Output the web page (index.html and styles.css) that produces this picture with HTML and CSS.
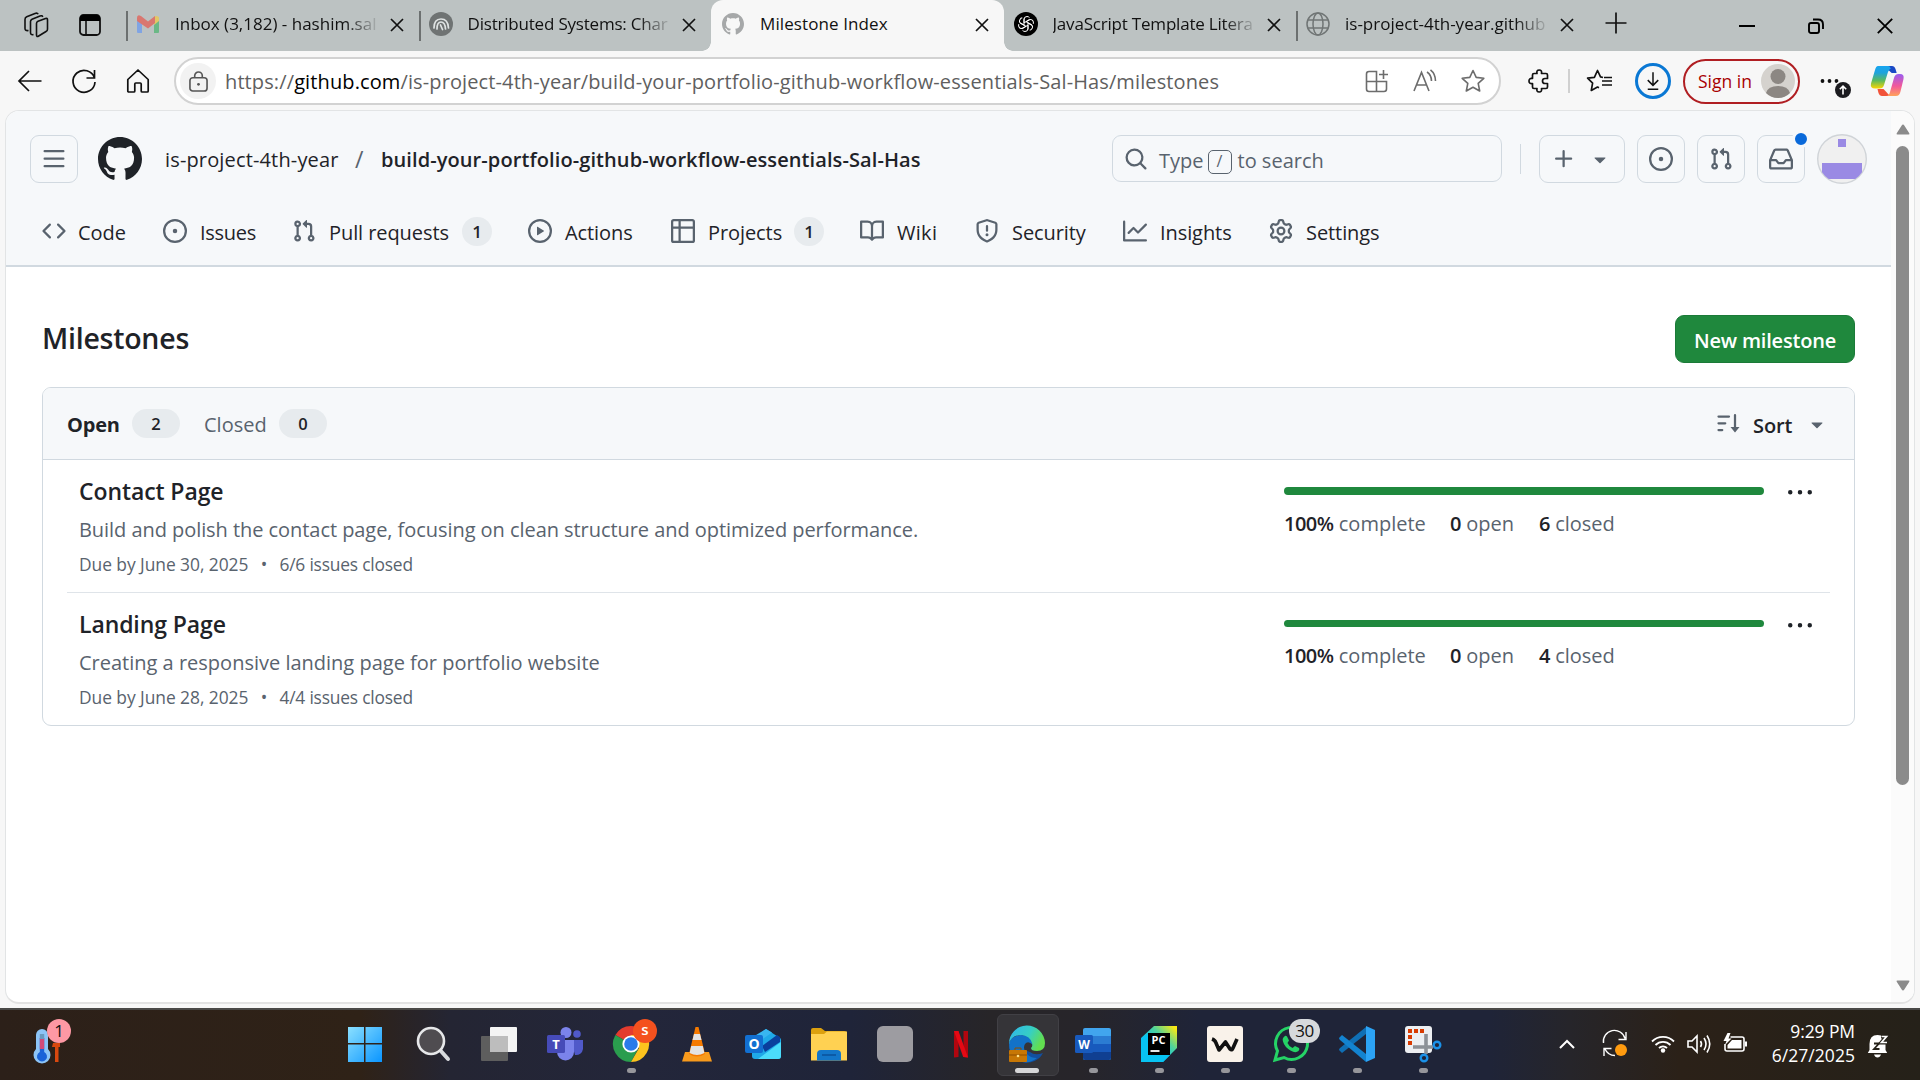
FILE: index.html
```html
<!DOCTYPE html>
<html lang="en">
<head>
<meta charset="utf-8">
<title>Milestone Index</title>
<link rel="stylesheet" href="styles.css">
</head>
<body>
<svg class="defs" width="0" height="0">
  <symbol id="mark" viewBox="0 0 24 24"><path d="M12 1C5.9225 1 1 5.9225 1 12C1 16.8675 4.14875 20.9787 8.52125 22.4362C9.07125 22.5325 9.2775 22.2025 9.2775 21.9137C9.2775 21.6525 9.26375 20.7862 9.26375 19.865C6.5 20.3737 5.785 19.1912 5.565 18.5725C5.44125 18.2562 4.905 17.28 4.4375 17.0187C4.0525 16.8125 3.5025 16.3037 4.42375 16.29C5.29 16.2762 5.90875 17.0875 6.115 17.4175C7.105 19.0812 8.68625 18.6137 9.31875 18.325C9.415 17.61 9.70375 17.1287 10.02 16.8537C7.5725 16.5787 5.015 15.63 5.015 11.4225C5.015 10.2262 5.44125 9.23625 6.1425 8.46625C6.0325 8.19125 5.6475 7.06375 6.2525 5.55125C6.2525 5.55125 7.17375 5.2625 9.2775 6.67875C10.1575 6.43125 11.0925 6.3075 12.0275 6.3075C12.9625 6.3075 13.8975 6.43125 14.7775 6.67875C16.8813 5.24875 17.8025 5.55125 17.8025 5.55125C18.4075 7.06375 18.0225 8.19125 17.9125 8.46625C18.6138 9.23625 19.04 10.2125 19.04 11.4225C19.04 15.6437 16.4688 16.5787 14.0213 16.8537C14.42 17.1975 14.7638 17.8575 14.7638 18.8887C14.7638 20.36 14.75 21.5425 14.75 21.9137C14.75 22.2025 14.9563 22.5462 15.5063 22.4362C19.8513 20.9787 23 16.8537 23 12C23 5.9225 18.0775 1 12 1Z"/></symbol>
  <symbol id="pr" viewBox="0 0 16 16"><path d="M1.5 3.25a2.25 2.25 0 1 1 3 2.122v5.256a2.251 2.251 0 1 1-1.5 0V5.372A2.25 2.25 0 0 1 1.5 3.25Zm5.677-.177L9.573.677A.25.25 0 0 1 10 .854V2.5h1A2.5 2.5 0 0 1 13.5 5v5.628a2.251 2.251 0 1 1-1.5 0V5a1 1 0 0 0-1-1h-1v1.646a.25.25 0 0 1-.427.177L7.177 3.427a.25.25 0 0 1 0-.354ZM3.75 2.5a.75.75 0 1 0 0 1.5.75.75 0 0 0 0-1.5Zm0 9.5a.75.75 0 1 0 0 1.5.75.75 0 0 0 0-1.5Zm8.25.75a.75.75 0 1 0 1.5 0 .75.75 0 0 0-1.5 0Z"/></symbol>
  <symbol id="issue" viewBox="0 0 16 16"><path d="M8 9.5a1.5 1.5 0 1 0 0-3 1.5 1.5 0 0 0 0 3Z"/><path d="M8 0a8 8 0 1 1 0 16A8 8 0 0 1 8 0ZM1.5 8a6.5 6.5 0 1 0 13 0 6.5 6.5 0 0 0-13 0Z"/></symbol>
  <symbol id="caret" viewBox="0 0 16 16"><path d="m4.427 7.427 3.396 3.396a.25.25 0 0 0 .354 0l3.396-3.396A.25.25 0 0 0 11.396 7H4.604a.25.25 0 0 0-.177.427Z"/></symbol>
  <symbol id="kebab" viewBox="0 0 16 16"><path d="M8 9a1.5 1.5 0 1 0 0-3 1.5 1.5 0 0 0 0 3ZM1.5 9a1.5 1.5 0 1 0 0-3 1.5 1.5 0 0 0 0 3Zm13 0a1.5 1.5 0 1 0 0-3 1.5 1.5 0 0 0 0 3Z"/></symbol>
  <symbol id="x" viewBox="0 0 14 14"><path d="M1 1l12 12M13 1L1 13" fill="none" stroke="#111" stroke-width="1.7"/></symbol>
</svg>

<header class="tabstrip">
  <div class="strip-start">
    <svg class="workspaces" viewBox="0 0 26 26" fill="none" stroke="#111" stroke-width="1.6" stroke-linejoin="round"><path d="M13.500 11.500q0-1.500 1.500-2.200l7.500-2.800q2-.6 2 1.200v9.500q0 1.500-1.500 2.300l-7.300 4.500q-2.200 1.300-2.200-1z"/><path d="M10.500 22.500q-3 .8-3-2V9.500q0-1.600 1.500-2.300l8-3.200q2.200-.8 2.700 1"/><path d="M5.500 18.500Q2 19 2 16.500V7.500q0-2 1.700-2.700l8.300-3.300q2.500-1 3 .8"/></svg>
    <svg class="tab-actions" viewBox="0 0 22 22"><rect x="1" y="1" width="20" height="20" rx="3.500" fill="none" stroke="#111" stroke-width="1.800"/><path d="M1 7V4a3 3 0 0 1 3-3h14a3 3 0 0 1 3 3v3z" fill="#000"/><path d="M7 7v14" stroke="#111" stroke-width="1.600"/></svg>
  </div>
  <div class="tab">
    <svg class="favicon dim" viewBox="0 0 24 24"><path d="M1 5.500v14.500q0 1 1 1h4V10z" fill="#6d9bef"/><path d="M23 5.500v14.500q0 1-1 1h-4V10z" fill="#51b573"/><path d="M18 5l2-1q3 0 3 2v3l-5 4z" fill="#f0c948"/><path d="M1 6q0-4 4-2l7 5.500L19 4v7l-7 5.500L1 9z" fill="#e35e55"/></svg>
    <span class="tab-title">Inbox (3,182) - hashim.sal</span>
    <svg class="tab-x"><use href="#x"/></svg>
  </div>
  <div class="tab">
    <svg class="favicon" viewBox="0 0 24 24"><circle cx="12" cy="12" r="12" fill="#6f7373"/><g fill="none" stroke="#dfe3e3" stroke-width="1.700" stroke-linecap="round"><path d="M5 16q0-9 7-9t7.500 9"/><path d="M8 17q0-7 4-7t4.500 7"/><path d="M11.500 13l2 4.500"/></g></svg>
    <span class="tab-title snug">Distributed Systems: Char</span>
    <svg class="tab-x"><use href="#x"/></svg>
  </div>
  <div class="tab active">
    <svg class="favicon mark-dim"><use href="#mark"/></svg>
    <span class="tab-title full">Milestone Index</span>
    <svg class="tab-x"><use href="#x"/></svg>
  </div>
  <div class="tab plain">
    <svg class="favicon" viewBox="0 0 24 24"><circle cx="12" cy="12" r="12" fill="#000"/><g fill="none" stroke="#fff" stroke-width="1"><g id="petal"><path d="M10 13.200V7.500q0-3 3-3 1.500 0 2.500 1.200M12 9.700l3.700-2.100"/></g><use href="#petal" transform="rotate(60 12 12)"/><use href="#petal" transform="rotate(120 12 12)"/><use href="#petal" transform="rotate(180 12 12)"/><use href="#petal" transform="rotate(240 12 12)"/><use href="#petal" transform="rotate(300 12 12)"/></g></svg>
    <span class="tab-title snug">JavaScript Template Litera</span>
    <svg class="tab-x"><use href="#x"/></svg>
  </div>
  <div class="tab">
    <svg class="favicon" viewBox="0 0 24 24" fill="none" stroke="#707575" stroke-width="1.500"><circle cx="12" cy="12" r="11"/><ellipse cx="12" cy="12" rx="5" ry="11"/><path d="M2 8h20M2 16h20"/></svg>
    <span class="tab-title">is-project-4th-year.github</span>
    <svg class="tab-x"><use href="#x"/></svg>
  </div>
  <div class="new-tab"><svg width="22" height="22" viewBox="0 0 22 22" stroke="#111" stroke-width="1.700"><path d="M11 0.500v21M.5 11h21"/></svg></div>
  <div class="win-buttons">
    <svg viewBox="0 0 16 16"><path d="M0 8h16" stroke="#000" stroke-width="2"/></svg>
    <svg viewBox="0 0 16 16" fill="none" stroke="#000" stroke-width="1.900"><rect x="1" y="5" width="10" height="10" rx="2"/><path d="M5 1.500h5q5 0 5 5V11"/></svg>
    <svg viewBox="0 0 16 16"><path d="M.8.8l14.400 14.400M15.200.8L.8 15.200" stroke="#000" stroke-width="1.800"/></svg>
  </div>
</header>

<div class="toolbar">
  <div class="nav-buttons">
    <svg viewBox="0 0 24 24"><path d="M23.500 12H1M11 2L1 12l10 10"/></svg>
    <svg viewBox="0 0 24 24"><path d="M22.500 9A11 11 0 1 0 23 13M22.500 1v8h-8"/></svg>
    <svg viewBox="0 0 24 24"><path d="M1.800 10.500L12 1l10.200 9.500V22q0 1-1 1h-5q-1 0-1-1v-7q0-1-1-1H9.800q-1 0-1 1v7q0 1-1 1h-5q-1 0-1-1z" stroke-linejoin="round"/></svg>
  </div>
  <div class="urlbar">
    <span class="lock"><svg viewBox="0 0 20 22" fill="none" stroke="#555" stroke-width="1.600"><rect x="1" y="7" width="18" height="14" rx="3"/><path d="M6 7V5a4 4 0 0 1 8 0v2"/><circle cx="10" cy="14" r="1.500" fill="#555" stroke="none"/></svg></span>
    <span class="url">https://<b>github.com</b>/is-project-4th-year/build-your-portfolio-github-workflow-essentials-Sal-Has/milestones</span>
    <div class="url-icons">
      <svg viewBox="0 0 24 24"><path d="M1.500 12.500V5q0-2.500 2.500-2.500h7.500v10M1.500 12.500h20V20q0 2.500-2.500 2.500H4Q1.500 22.500 1.500 20zM11.500 12.500v10M18.500 1v9M14 5.500h9"/></svg>
      <svg viewBox="0 0 24 24"><path d="M1 22L8.500 3.500 16 22M3.500 16h10M14 3q4.500 3 4.500 9M17.500 .8q5 4 5 11.200"/></svg>
      <svg viewBox="0 0 24 24"><path d="M12 1.500l3.200 6.900 7.600.9-5.600 5.100 1.500 7.600-6.700-3.800L5.300 22l1.500-7.600L1.200 9.300l7.600-.9z" stroke-linejoin="round"/></svg>
    </div>
  </div>
  <div class="tools">
    <svg class="ext" viewBox="0 0 24 24"><path d="M7 4.500h3q-.8-3.500 2.200-3.500t2.300 3.500H19q1.500 0 1.500 1.500v3.500H18q-2.500 0-2.500 2.500t2.500 2.500h2.500V18q0 1.500-1.500 1.500h-4.500q.7 3.500-2.300 3.500T10 19.500H7Q5.500 19.500 5.500 18v-3.500Q2 15 2 12t3.500-2.500V6q0-1.500 1.500-1.500z" stroke-linejoin="round"/></svg>
    <i class="bar"></i>
    <svg class="fav" viewBox="0 0 26 24"><path d="M16 8.500l-2.500-.6L10.500 1.500 7.400 8.300l-6.800.9 5 4.900-1.300 7.300 6.200-3.300 1.500.7M15 12h10M17 8.500h8M15 16h10" stroke-linejoin="round"/></svg>
    <span class="download"><svg viewBox="0 0 16 22"><path d="M8 1v15M2 10l6 6 6-6M2 20.500h12"/></svg></span>
    <span class="signin">Sign in<svg viewBox="0 0 34 34"><circle cx="17" cy="17" r="17" fill="#d5d2ce"/><circle cx="17" cy="12.500" r="7.500" fill="#8c8783"/><path d="M5 29q2-7 12-7t12 7q-5 5-12 5T5 29z" fill="#8c8783"/></svg></span>
    <svg class="more" viewBox="0 0 32 26"><g stroke="none"><circle cx="2.500" cy="7" r="1.900"/><circle cx="9.500" cy="7" r="1.900"/><circle cx="16.500" cy="7" r="1.900"/><circle cx="23" cy="16" r="9.500" fill="#f7f7f7"/><circle cx="23" cy="16" r="8" fill="#1b1b1f"/></g><path d="M23 20.500v-8M19.800 15.300l3.200-3.200 3.200 3.200" stroke="#fff" stroke-width="1.600"/></svg>
    <svg class="copilot" viewBox="0 0 34 32"><defs><linearGradient id="c1" x1="0" y1="0" x2="0" y2="1"><stop offset="0" stop-color="#18a6f0"/><stop offset=".3" stop-color="#1fa3dd"/><stop offset=".65" stop-color="#5dbb5b"/><stop offset="1" stop-color="#fbd500"/></linearGradient><linearGradient id="c2" x1="0" y1="0" x2="0" y2="1"><stop offset="0" stop-color="#9a5cf0"/><stop offset=".55" stop-color="#f2589a"/><stop offset="1" stop-color="#ffa35a"/></linearGradient></defs><path d="M14 1h8q2.500 0 3.500 3l1.200 4h-5z" fill="#1a49c5"/><path d="M20 31h-8q-2.500 0-3.500-3L7.500 24h6z" fill="#f2533a"/><path d="M8 1h10q2 0 2.500 2l.5 1q-1-1-3 3l-4 13q-1 3.500-4.500 3.500H5q-5 0-4-5L5 5q1-4 3-4z" fill="url(#c1)"/><path d="M26 31H16q3 0 4-4l4-14q1-4 4.500-4H30q4.500 0 3.500 5l-3 12.500q-1 4.500-4.500 4.500z" fill="url(#c2)"/></svg>
  </div>
</div>

<div class="frame">
<div class="viewport">
  <div class="page">
    <div class="gh-header">
      <div class="gh-top">
        <div class="sq"><svg viewBox="0 0 16 16"><path d="M1 2.750A.75.75 0 0 1 1.750 2h12.500a.75.75 0 0 1 0 1.500H1.750A.75.75 0 0 1 1 2.750Zm0 5A.75.75 0 0 1 1.750 7h12.500a.75.75 0 0 1 0 1.500H1.750A.75.75 0 0 1 1 7.750ZM1.750 12h12.500a.75.75 0 0 1 0 1.500H1.750a.75.75 0 0 1 0-1.500Z"/></svg></div>
        <svg class="logo"><use href="#mark"/></svg>
        <span class="owner">is-project-4th-year</span><span class="slash">/</span><span class="repo">build-your-portfolio-github-workflow-essentials-Sal-Has</span>
        <div class="search"><svg viewBox="0 0 16 16"><path d="M10.680 11.740a6 6 0 0 1-7.922-8.982 6 6 0 0 1 8.982 7.922l3.040 3.040a.749.749 0 0 1-.326 1.275.749.749 0 0 1-.734-.215ZM11.500 7a4.499 4.499 0 1 0-8.997 0A4.499 4.499 0 0 0 11.500 7Z"/></svg><span>Type</span><kbd>/</kbd><span>to search</span></div>
        <i class="vr"></i>
        <div class="sq plus"><svg viewBox="0 0 16 16"><path d="M7.750 2a.75.75 0 0 1 .75.75V7h4.250a.75.75 0 0 1 0 1.500H8.500v4.250a.75.75 0 0 1-1.500 0V8.500H2.750a.75.75 0 0 1 0-1.500H7V2.750A.75.75 0 0 1 7.750 2Z"/></svg><svg viewBox="0 0 16 16"><use href="#caret"/></svg></div>
        <div class="sq"><svg><use href="#issue"/></svg></div>
        <div class="sq"><svg><use href="#pr"/></svg></div>
        <div class="sq inbox"><svg viewBox="0 0 16 16"><path d="M2.800 2.060A1.750 1.750 0 0 1 4.410 1h7.180c.7 0 1.333.417 1.610 1.060l2.740 6.395c.04.093.06.194.06.295v4.500A1.750 1.750 0 0 1 14.250 15H1.750A1.750 1.750 0 0 1 0 13.250v-4.500c0-.101.02-.202.06-.295Zm1.610.44a.25.25 0 0 0-.23.152L1.887 8H4.750a.75.75 0 0 1 .6.3L6.625 10h2.750l1.275-1.700a.75.75 0 0 1 .6-.3h2.863L11.820 2.652a.25.25 0 0 0-.23-.152Zm10.090 7h-2.875l-1.275 1.700a.75.75 0 0 1-.6.3h-3.500a.75.75 0 0 1-.6-.3L4.375 9.500H1.500v3.750c0 .138.112.25.25.25h12.500a.25.25 0 0 0 .25-.25Z"/></svg><i class="dot"></i></div>
        <svg class="avatar" viewBox="0 0 50 50"><defs><clipPath id="av"><circle cx="25" cy="25" r="24"/></clipPath></defs><circle cx="25" cy="25" r="24.300" fill="#f0f0f0" stroke="#d0d4d8" stroke-width="1.400"/><g clip-path="url(#av)" fill="#9a8ae4"><path d="M21 5h8v8h-8zM5 29h40v16H5z"/></g></svg>
      </div>
      <nav class="gh-nav">
        <a><svg viewBox="0 0 16 16"><path d="m11.280 3.220 4.250 4.250a.75.75 0 0 1 0 1.060l-4.250 4.250a.749.749 0 0 1-1.275-.326.749.749 0 0 1 .215-.734L13.940 8l-3.720-3.720a.749.749 0 0 1 .326-1.275.749.749 0 0 1 .734.215Zm-6.560 0a.751.751 0 0 1 1.042.018.751.751 0 0 1 .018 1.042L2.060 8l3.720 3.720a.749.749 0 0 1-.326 1.275.749.749 0 0 1-.734-.215L.47 8.530a.75.75 0 0 1 0-1.060Z"/></svg><span class="w-code">Code</span></a>
        <a><svg><use href="#issue"/></svg><span class="w-issues">Issues</span></a>
        <a><svg><use href="#pr"/></svg><span class="w-pulls">Pull requests</span><em>1</em></a>
        <a><svg viewBox="0 0 16 16"><path d="M8 0a8 8 0 1 1 0 16A8 8 0 0 1 8 0ZM1.500 8a6.500 6.500 0 1 0 13 0 6.500 6.500 0 0 0-13 0Zm4.879-2.773 4.264 2.559a.25.25 0 0 1 0 .428l-4.264 2.559A.25.25 0 0 1 6 10.559V5.442a.25.25 0 0 1 .379-.215Z"/></svg><span class="w-actions">Actions</span></a>
        <a><svg viewBox="0 0 16 16"><path d="M0 1.750C0 .784.784 0 1.750 0h12.500C15.216 0 16 .784 16 1.750v12.500A1.750 1.750 0 0 1 14.250 16H1.750A1.750 1.750 0 0 1 0 14.250ZM6.500 6.500v8h7.750a.25.25 0 0 0 .25-.25V6.500Zm8-1.500V1.750a.25.25 0 0 0-.25-.25H6.500V5Zm-13 1.500v7.750c0 .138.112.25.25.25H5v-8ZM5 5V1.500H1.750a.25.25 0 0 0-.25.25V5Z"/></svg><span class="w-projects">Projects</span><em>1</em></a>
        <a><svg viewBox="0 0 16 16"><path d="M0 1.750A.75.75 0 0 1 .75 1h4.253c1.227 0 2.317.59 3 1.501A3.743 3.743 0 0 1 11.006 1h4.245a.75.75 0 0 1 .75.75v10.500a.75.75 0 0 1-.75.75h-4.507a2.250 2.250 0 0 0-1.591.659l-.622.621a.75.75 0 0 1-1.060 0l-.622-.621A2.250 2.250 0 0 0 5.258 13H.75a.75.75 0 0 1-.75-.75Zm7.251 10.324.004-5.073-.002-2.253A2.250 2.250 0 0 0 5.003 2.500H1.500v9h3.757a3.750 3.750 0 0 1 1.994.574ZM8.755 4.750l-.004 7.322a3.752 3.752 0 0 1 1.992-.572H14.500v-9h-3.495a2.250 2.250 0 0 0-2.250 2.250Z"/></svg><span class="w-wiki">Wiki</span></a>
        <a><svg viewBox="0 0 16 16"><path d="M7.467.133a1.748 1.748 0 0 1 1.066 0l5.250 1.680A1.750 1.750 0 0 1 15 3.480V7c0 1.566-.32 3.182-1.303 4.682-.983 1.498-2.585 2.813-5.032 3.855a1.697 1.697 0 0 1-1.330 0c-2.447-1.042-4.049-2.357-5.032-3.855C1.320 10.182 1 8.566 1 7V3.480a1.750 1.750 0 0 1 1.217-1.667Zm.61 1.429a.25.25 0 0 0-.153 0l-5.250 1.680a.25.25 0 0 0-.174.238V7c0 1.358.275 2.666 1.057 3.860.784 1.194 2.121 2.340 4.366 3.297a.196.196 0 0 0 .154 0c2.245-.956 3.582-2.104 4.366-3.298C13.225 9.666 13.500 8.360 13.500 7V3.480a.251.251 0 0 0-.174-.237l-5.250-1.680ZM8.750 4.750v3a.75.75 0 0 1-1.500 0v-3a.75.75 0 0 1 1.500 0ZM9 10.500a1 1 0 1 1-2 0 1 1 0 0 1 2 0Z"/></svg><span class="w-security">Security</span></a>
        <a><svg viewBox="0 0 16 16"><path d="M1.500 1.750V13.500h13.750a.75.75 0 0 1 0 1.500H.75a.75.75 0 0 1-.75-.75V1.750a.75.75 0 0 1 1.500 0Zm14.280 2.530-5.250 5.250a.75.75 0 0 1-1.060 0L7 7.060 4.280 9.780a.751.751 0 0 1-1.042-.018.751.751 0 0 1-.018-1.042l3.250-3.250a.75.75 0 0 1 1.060 0L10 7.940l4.720-4.720a.751.751 0 0 1 1.042.018.751.751 0 0 1 .018 1.042Z"/></svg><span class="w-insights">Insights</span></a>
        <a><svg viewBox="0 0 16 16"><path d="M8 0a8.200 8.200 0 0 1 .701.031C9.444.095 9.990.645 10.160 1.290l.288 1.107c.018.066.079.158.212.224.231.114.454.243.668.386.123.082.233.09.299.071l1.103-.303c.644-.176 1.392.021 1.820.63.27.385.506.792.704 1.218.315.675.111 1.422-.364 1.891l-.814.806c-.049.048-.098.147-.088.294.016.257.016.515 0 .772-.01.147.038.246.088.294l.814.806c.475.469.679 1.216.364 1.891a7.977 7.977 0 0 1-.704 1.217c-.428.61-1.176.807-1.820.63l-1.102-.302c-.067-.019-.177-.011-.3.071a5.909 5.909 0 0 1-.668.386c-.133.066-.194.158-.211.224l-.29 1.106c-.168.646-.715 1.196-1.458 1.260a8.006 8.006 0 0 1-1.402 0c-.743-.064-1.289-.614-1.458-1.260l-.289-1.106c-.018-.066-.079-.158-.212-.224a5.738 5.738 0 0 1-.668-.386c-.123-.082-.233-.09-.299-.071l-1.103.303c-.644.176-1.392-.021-1.820-.63a8.120 8.120 0 0 1-.704-1.218c-.315-.675-.111-1.422.363-1.891l.815-.806c.05-.048.098-.147.088-.294a6.214 6.214 0 0 1 0-.772c.01-.147-.038-.246-.088-.294l-.815-.806C.635 6.045.431 5.298.746 4.623a7.920 7.920 0 0 1 .704-1.217c.428-.61 1.176-.807 1.820-.63l1.102.302c.067.019.177.011.3-.071.214-.143.437-.272.668-.386.133-.066.194-.158.211-.224l.29-1.106C6.009.645 6.556.095 7.299.03 7.530.01 7.764 0 8 0Zm-.571 1.525c-.036.003-.108.036-.137.146l-.289 1.105c-.147.561-.549.967-.998 1.189-.173.086-.34.183-.5.29-.417.278-.97.423-1.529.27l-1.103-.303c-.109-.03-.175.016-.195.045-.22.312-.412.644-.573.990-.014.031-.021.11.059.19l.815.806c.411.406.562.957.53 1.456a4.709 4.709 0 0 0 0 .582c.032.499-.119 1.050-.53 1.456l-.815.806c-.081.08-.073.159-.059.19.162.346.353.677.573.989.02.03.085.076.195.046l1.102-.303c.56-.153 1.113-.008 1.530.27.161.107.328.204.501.29.447.222.85.629.997 1.189l.289 1.105c.029.109.101.143.137.146a6.600 6.600 0 0 0 1.142 0c.036-.003.108-.036.137-.146l.289-1.105c.147-.561.549-.967.998-1.189.173-.086.34-.183.5-.29.417-.278.97-.423 1.529-.27l1.103.303c.109.029.175-.016.195-.045.22-.313.411-.644.573-.990.014-.031.021-.11-.059-.19l-.815-.806c-.411-.406-.562-.957-.53-1.456a4.709 4.709 0 0 0 0-.582c-.032-.499.119-1.050.53-1.456l.815-.806c.081-.08.073-.159.059-.19a6.464 6.464 0 0 0-.573-.989c-.02-.03-.085-.076-.195-.046l-1.102.303c-.56.153-1.113.008-1.530-.27a4.440 4.440 0 0 0-.501-.29c-.447-.222-.85-.629-.997-1.189l-.289-1.105c-.029-.11-.101-.143-.137-.146a6.600 6.600 0 0 0-1.142 0ZM11 8a3 3 0 1 1-6 0 3 3 0 0 1 6 0ZM9.500 8a1.500 1.500 0 1 0-3.001.001A1.500 1.500 0 0 0 9.500 8Z"/></svg><span>Settings</span></a>
      </nav>
    </div>

    <main class="content">
      <div class="heading"><h1>Milestones</h1><button class="new">New milestone</button></div>
      <section class="box">
        <div class="box-head">
          <span class="open">Open</span><em>2</em><span class="closed">Closed</span><em>0</em>
          <div class="sort"><svg viewBox="0 0 16 16"><path d="M1 3h7M1 7.500h4.500M1 12h2.500M12 2v10" fill="none" stroke="#59636e" stroke-width="1.500" stroke-linecap="round"/><path d="M9 10h6l-3 3.600z"/></svg><span>Sort</span><svg><use href="#caret"/></svg></div>
        </div>
        <article class="row">
          <div class="info"><h2>Contact Page</h2><p class="desc">Build and polish the contact page, focusing on clean structure and optimized performance.</p><p class="meta"><span>Due by June 30, 2025</span><span class="bullet">•</span><span>6/6 issues closed</span></p></div>
          <div class="stats"><div class="progress"></div><div class="nums"><span class="pct"><b>100%</b> complete</span><span class="opn"><b>0</b> open</span><span><b>6</b> closed</span></div></div>
          <svg class="kebab"><use href="#kebab"/></svg>
        </article>
        <article class="row">
          <div class="info"><h2>Landing Page</h2><p class="desc short">Creating a responsive landing page for portfolio website</p><p class="meta"><span>Due by June 28, 2025</span><span class="bullet">•</span><span>4/4 issues closed</span></p></div>
          <div class="stats"><div class="progress"></div><div class="nums"><span class="pct"><b>100%</b> complete</span><span class="opn"><b>0</b> open</span><span><b>4</b> closed</span></div></div>
          <svg class="kebab"><use href="#kebab"/></svg>
        </article>
      </section>
    </main>
  </div>
  <div class="scrollbar">
    <svg viewBox="0 0 14 11"><path d="M7 .5q.8 0 1.300.9l5 7.800q.6 1.300-.8 1.300h-11q-1.400 0-.8-1.300l5-7.800Q6.200.5 7 .5z"/></svg>
    <div class="thumb"></div>
    <svg viewBox="0 0 14 11"><path d="M7 10.500q.8 0 1.300-.9l5-7.800Q13.900.5 12.500.5h-11Q.1.5.7 1.800l5 7.800q.5.9 1.300.9z"/></svg>
  </div>
</div>
</div>

<footer class="taskbar">
  <div class="weather"><svg viewBox="0 0 40 50"><path d="M3 9a6 6 0 0 1 12 0v14a8.500 8.500 0 1 1-12 0z" fill="#8cc4f7"/><path d="M6.800 12h4.400v14a5 5 0 1 1-4.400 0z" fill="#1a63d8"/><path d="M6.800 12h4.400v11H6.800z" fill="#d24a78"/><path d="M6.800 8h4.400v5H6.800z" fill="#6a9abf"/><path d="M20 17h7v4h-1.500v15h-3.500V21H19z" fill="#d9480f"/></svg><span class="alert">1</span></div>
  <div class="apps">
    <div class="app"><svg viewBox="0 0 36 36"><defs><linearGradient id="w1" x1="0" y1="0" x2="1" y2="1"><stop offset="0" stop-color="#8be0ff"/><stop offset="1" stop-color="#0a95ff"/></linearGradient></defs><path d="M1 1h16v16H1zM18.500 1H35v16H18.500zM1 18.500h16V36H1zM18.500 18.500H35V36H18.500z" fill="url(#w1)"/></svg></div>
    <div class="app"><svg viewBox="0 0 36 36"><path d="M25 24l8 9" stroke="#d9dbde" stroke-width="4" stroke-linecap="round"/><circle cx="16" cy="15" r="13" fill="#4f4c50" stroke="#e6e7e9" stroke-width="2.600"/></svg></div>
    <div class="app"><svg viewBox="0 0 36 36"><rect y="10" width="27" height="25" rx="1" fill="#5e5e5e"/><rect x="9" y="1" width="27" height="25" rx="1" fill="#f4f4f4"/><path d="M9 10h18v16H9z" fill="#bdbdbd"/></svg></div>
    <div class="app"><svg viewBox="0 0 36 36"><circle cx="30" cy="8" r="3.800" fill="#5059c9"/><path d="M24 14h12v9a7 7 0 0 1-8 6z" fill="#5059c9"/><circle cx="19" cy="6.500" r="5.500" fill="#7b83eb"/><path d="M10 14h17v12a8.500 8.500 0 0 1-17 0z" fill="#7b83eb"/><rect y="9" width="18" height="18" rx="1.500" fill="#464bb8"/><text x="9" y="23" class="glyph" font-size="13">T</text></svg></div>
    <div class="app running"><svg viewBox="0 0 36 36"><path d="M18 18L2.400 9A18 18 0 0 1 33.600 9z" fill="#e33b2e"/><path d="M18 18L2.400 9a18 18 0 0 0 15.600 27l7-13z" fill="#2a9d4e"/><path d="M18 9h15.600a18 18 0 0 1-15.600 27l8-14z" fill="#fcc31e"/><circle cx="18" cy="18" r="8.600" fill="#fff"/><circle cx="18" cy="18" r="6.800" fill="#2a7bea"/></svg><span class="badge-s">s</span></div>
    <div class="app"><svg viewBox="0 0 36 36"><path d="M6 26h24l3 9.500H3z" fill="#f89a1c"/><path d="M16.500 1h3L26 28q-8 5-16 0z" fill="#f57a00"/><path d="M15 8h6l1.500 6h-9zM12.200 20h11.600l1.600 7q-7.400 4-14.800 0z" fill="#e3e3e3"/></svg></div>
    <div class="app"><svg viewBox="0 0 36 36"><path d="M21 3l14 9q1 .7 1 2v16q0 3-3 3H10q-3 0-3-3V13z" fill="#1fa9e8"/><path d="M6 12L21 3l6 3.500L12 17z" fill="#38b6f0"/><path d="M17 20L32 9l3 2v5L20 26z" fill="#0a3f9d"/><path d="M36 16v14q0 3-3 3H13z" fill="#4bdcfb"/><rect y="9" width="18" height="18" rx="2" fill="#1270d2"/><text x="9" y="23" class="glyph" font-size="14">O</text></svg></div>
    <div class="app"><svg viewBox="0 0 36 36"><path d="M0 4q0-2 2-2h8l4 3h19q3 0 3 3v4H0z" fill="#dca00f"/><path d="M0 8h13l3-2.500h20V34.500H0z" fill="#ffd152"/><path d="M6 34.500V28q0-4 4-4h16q4 0 4 4v6.500z" fill="#1376c9"/><path d="M11 29h14" stroke="#0b529a" stroke-width="1.500"/></svg></div>
    <div class="app"><svg viewBox="0 0 36 36"><rect width="36" height="36" rx="6" fill="#9d9ca1"/></svg></div>
    <div class="app"><svg viewBox="0 0 36 36"><path d="M11 5h4.500v26L11 31.500zM20.500 5H25v26.500l-4.500-.5z" fill="#b1060f"/><path d="M11 5h4.500L25 31.500l-4.800-.6z" fill="#e50914"/></svg></div>
    <div class="app running current"><svg viewBox="0 0 36 36"><defs><linearGradient id="e1" x1="0" y1="0" x2="1" y2=".4"><stop offset="0" stop-color="#2fb5ee"/><stop offset=".6" stop-color="#36cfc4"/><stop offset="1" stop-color="#62de50"/></linearGradient></defs><path d="M0 19A18 18 0 0 0 34 27q-8 3-13-1z" fill="#124f9f"/><path d="M0 17Q2 10 12 9q12 0 12 10-5-5-8-1-3 5 3 11 3 3 9 3-6 5-13 4Q0 33 0 17z" fill="#1272c8"/><path d="M0 18A18 18 0 0 1 36 17q0 8-8 8-6 0-6-3 2-2 1-5-2-7-10-8Q2 9 0 18z" fill="url(#e1)"/><rect y="24" width="18" height="12" rx="1" fill="#c77705"/><path d="M0 29h18M6 24v-2h6v2" stroke="#8d4e00" fill="none"/><circle cx="9" cy="30" r="1.300" fill="#ffe28a"/></svg></div>
    <div class="app running"><svg viewBox="0 0 36 36"><rect x="8" y="2" width="28" height="32" rx="2" fill="#41a5ee"/><path d="M8 10h28v8H8z" fill="#2b7cd3"/><path d="M8 18h28v8H8z" fill="#185abd"/><path d="M8 26h28v6q0 2-2 2H10q-2 0-2-2z" fill="#103f91"/><rect y="9" width="18" height="18" rx="1.500" fill="#185abd"/><text x="9" y="22.500" class="glyph" font-size="12">W</text></svg></div>
    <div class="app running"><svg viewBox="0 0 36 36"><defs><linearGradient id="p1" x1="0" y1="1" x2="1" y2="0"><stop offset=".35" stop-color="#07c3f2"/><stop offset=".65" stop-color="#4fd39b"/><stop offset=".95" stop-color="#fbe912"/></linearGradient></defs><path d="M13 0h23v22L22 36H0V12z" fill="url(#p1)"/><path d="M0 14L7 7v22h22L22 36H0z" fill="#07c3f2"/><rect x="7" y="7" width="22" height="22" fill="#000"/><text x="17.500" y="18" class="glyph" font-size="11">PC</text><path d="M9.500 25h9" stroke="#fff" stroke-width="1.800"/></svg></div>
    <div class="app running"><svg viewBox="0 0 36 36"><rect width="36" height="36" rx="3" fill="#f9f2ea"/><path d="M5 13q3 1 4 4l3 7 6.500-8 4.500 7q2 2 3-1l4-9" fill="none" stroke="#111" stroke-width="3.600" stroke-linejoin="round"/></svg></div>
    <div class="app running"><svg viewBox="0 0 36 36"><path d="M2 34l2.500-9A16 16 0 1 1 11 31.500z" fill="none" stroke="#25d366" stroke-width="3"/><path d="M11 11q1.500-2 3-.5l2 4-1.500 2.500q1.500 3.500 5 5l2.500-2 4 2q1 1-.5 3-3 2.500-8-.5-6-3.500-7.500-9Q9 12.500 11 11z" fill="#25d366"/></svg><span class="badge-n">30</span></div>
    <div class="app running"><svg viewBox="0 0 36 36"><path d="M0 24l3 3 24-19V1L1 22q-1 1-1 2z" fill="#0f6fb5"/><path d="M0 12l3-3 24 19v8L1 14q-1-1-1-2z" fill="#1383d0"/><path d="M27 0l9 4v28l-9 4z" fill="#2ca3f5"/></svg></div>
    <div class="app running"><svg viewBox="0 0 36 36"><rect width="27" height="27" rx="3" fill="#eceff2"/><path d="M3 5h4M9 5h4M15 5h4M3 11h4M3 17h4" stroke="#d83b01" stroke-width="4"/><path d="M8 21h20M21 8v20" stroke="#8c9197" stroke-width="3.600"/><g fill="none" stroke="#1a91e8" stroke-width="2.400"><circle cx="32" cy="19" r="3.300"/><circle cx="19" cy="32" r="3.300"/></g></svg></div>
  </div>
  <div class="tray">
    <svg class="t-caret" viewBox="0 0 16 10"><path d="M1 9l7-7 7 7" stroke-width="2"/></svg>
    <svg class="t-sync" viewBox="0 0 26 26"><path d="M1.500 12A11 11 0 0 1 23 7.500M24 1v7.500h-7.500M13 24.500A11 11 0 0 1 3 18M2 25v-7.500h7.500" stroke-width="1.400"/><circle cx="19" cy="19" r="6" fill="#ff9b0f" stroke="none"/></svg>
    <svg class="t-wifi" viewBox="0 0 24 18"><path d="M1 6.500a15.500 15.500 0 0 1 22 0M4.500 10a10.600 10.600 0 0 1 15 0M8 13a6 6 0 0 1 8 0" stroke-width="1.800"/><circle cx="12" cy="15.500" r="2.200" fill="#fff" stroke="none"/></svg>
    <svg class="t-sound" viewBox="0 0 24 20"><path d="M1 7h4l5-5v16l-5-5H1zM13.500 7q2 3 0 6M17 4q4 6 0 12M20 1.500q5.500 8.500 0 17" stroke-width="1.600"/></svg>
    <svg class="t-batt" viewBox="0 0 24 20"><path d="M7.500 4H19q2 0 2 2v10q0 2-2 2H4q-2 0-2-2v-5" stroke-width="1.600"/><path d="M9 7h9.500v8.500H4.500V12zM22 8.500h2v5h-2zM4.500 0L.5 8h3L2 12l6.500-6.500H5.500L7.500 0z" fill="#fff" stroke="none"/></svg>
    <div class="clock"><span>9:29 PM</span><span>6/27/2025</span></div>
    <svg class="t-bell" viewBox="0 0 24 24"><path d="M2.500 16V10Q2.500 1 10.500 1q8 0 8 9v6l1.700 3H.8zM7 20.500h7q-1 3-3.500 3T7 20.500z" fill="#fff" stroke="none"/><path d="M14 2.500h5.500l-5 6h5.500" stroke="#252119" stroke-width="4"/><path d="M7 9.500h5l-5 5.500h5.500" stroke="#252119" stroke-width="1.800"/><path d="M14.500 2.500h5l-5 6h5.500" stroke-width="1.700"/></svg>
  </div>
</footer>
</body>
</html>
```
FILE: styles.css
```css
* { box-sizing: border-box; }
body {
  margin: 0;
  width: 1920px;
  height: 1080px;
  overflow: hidden;
  display: flex;
  flex-direction: column;
  background: #f7f7f7;
  font-family: "Open Sans", "Noto Sans", sans-serif;
  color: #1f2328;
}
svg { flex: none; display: block; overflow: visible; }
.defs { position: absolute; }
em { font-style: normal; }

/* tab strip */
.tabstrip { height: 51px; flex: none; display: flex; background: #bcc2c2; }
.strip-start { width: 126px; height: 50px; flex: none; display: flex; align-items: center; padding-left: 23px; gap: 30px; }
.workspaces { width: 26px; height: 26px; }
.tab-actions { width: 22px; height: 22px; }
.tab { width: 292.500px; height: 51px; flex: none; display: flex; align-items: center; padding: 0 15px 4px 10px; background: linear-gradient(#6c7070, #6c7070) 0 11px / 2px 30px no-repeat; }
.tab.active { position: relative; background: #f7f7f7; border-radius: 12px 12px 0 0; }
.tab.active::before, .tab.active::after { content: ""; position: absolute; bottom: 0; width: 9px; height: 9px; }
.tab.active::before { left: -9px; background: radial-gradient(circle at 0 0, transparent 8.500px, #f7f7f7 9px); }
.tab.active::after { right: -9px; background: radial-gradient(circle at 100% 0, transparent 8.500px, #f7f7f7 9px); }
.tab.plain { background: none; }
.favicon { width: 24px; height: 24px; }
.dim { opacity: .75; }
.mark-dim { fill: #a6a8a9; }
.tab-title { width: 203px; margin-left: 15px; overflow: hidden; white-space: nowrap; font-size: 17px; letter-spacing: 0; color: #111; -webkit-mask-image: linear-gradient(90deg, #000 84%, transparent 101%); mask-image: linear-gradient(90deg, #000 84%, transparent 101%); }
.tab-title.snug { letter-spacing: -.2px; }
.tab-title.full { letter-spacing: .1px; -webkit-mask-image: none; mask-image: none; }
.tab-x { width: 14px; height: 14px; margin-left: auto; margin-top: 3px; }
.new-tab { width: 54px; display: flex; justify-content: center; padding-top: 12px; }
.new-tab svg { margin-left: 1px; }
.win-buttons { margin-left: auto; display: flex; gap: 53px; padding: 18px 27px 0 0; }
.win-buttons svg { width: 16px; height: 16px; }

/* toolbar */
.toolbar { height: 59px; flex: none; display: flex; align-items: center; padding: 1px 16px 0 18px; }
.toolbar svg { fill: none; stroke: #111; stroke-width: 1.700; }
.nav-buttons { display: flex; gap: 30px; width: 156px; }
.nav-buttons svg { width: 24px; height: 24px; }
.urlbar { width: 1327px; height: 48px; flex: none; display: flex; align-items: center; border: 2px solid #d2d2d2; border-radius: 24px; background: #fff; padding: 0 14px 0 4px; }
.lock { width: 36px; height: 36px; border-radius: 50%; background: #f2f2f2; display: flex; align-items: center; justify-content: center; }
.toolbar .lock svg { width: 19px; height: 21px; stroke: #555; }
.url { margin-left: 9px; font-size: 20px; letter-spacing: .115px; color: #5f5f5f; white-space: nowrap; }
.url b { font-weight: 400; color: #000; }
.url-icons { margin-left: auto; display: flex; gap: 24px; }
.toolbar .url-icons svg { width: 24px; height: 24px; stroke: #6c6c6c; stroke-width: 1.600; }
.tools { flex: 1; display: flex; align-items: center; margin-left: 26px; }
.ext { width: 24px; height: 24px; }
.bar { width: 2px; height: 24px; background: #d0d0d0; margin: 0 17px 0 17px; }
.fav { width: 26px; height: 24px; }
.download { width: 36px; height: 36px; margin-left: 22px; border: 3px solid #0a78d4; border-radius: 50%; display: flex; align-items: center; justify-content: center; }
.download svg { width: 14px; height: 20px; }
.signin { width: 117px; height: 45px; margin-left: 12px; border: 2px solid #b01e22; border-radius: 23px; display: flex; align-items: center; justify-content: space-between; padding: 0 3px 0 13px; color: #a80000; font-size: 17.500px; }
.signin svg { width: 34px; height: 34px; stroke: none; }
.toolbar .signin svg { stroke: none; }
.toolbar .more { width: 32px; height: 26px; margin-left: 20px; margin-top: 12px; fill: #111; }
.toolbar .copilot { width: 34px; height: 32px; margin-left: auto; stroke: none; }

/* browser frame */
.frame { height: 898px; flex: none; padding: 0 5px; }
.viewport { height: 894px; display: flex; border: 1px solid #e2e4e5; border-bottom: 2px solid #e2e2e2; border-radius: 14px; overflow: hidden; background: #fff; }
.page { width: 1885px; flex: none; display: flex; flex-direction: column; }
.scrollbar { flex: 1; background: #fbfbfb; display: flex; flex-direction: column; align-items: center; padding: 13px 0 11px; fill: #8b8b8b; }
.scrollbar svg { width: 14px; height: 11px; }
.thumb { width: 13px; height: 639px; margin: 11px 0 auto; border-radius: 7px; background: #8b8b8b; }

/* repository header */
.gh-header { height: 156px; flex: none; background: #f6f8fa; border-bottom: 2px solid #d1d9e0; fill: #59636e; }
.gh-top { height: 96px; display: flex; align-items: center; padding: 0 24px; }
.sq { width: 48px; height: 48px; flex: none; display: flex; align-items: center; justify-content: center; border: 1px solid #d1d9e0; border-radius: 9px; margin-left: 12px; }
.sq:first-child { margin-left: 0; }
.sq svg, .gh-nav svg { width: 24px; height: 24px; }
.logo { width: 48px; height: 48px; margin-left: 18px; fill: #1f2328; }
.owner, .repo, .slash { font-size: 20px; white-space: nowrap; }
.owner { width: 174px; margin-left: 21px; letter-spacing: .15px; }
.slash { width: 42px; padding-left: 16px; font-size: 23px; color: #59636e; }
.repo { font-weight: 600; letter-spacing: .09px; }
.search { width: 390px; height: 47px; flex: none; margin-left: auto; margin-bottom: 1px; display: flex; align-items: center; border: 1px solid #d1d9e0; border-radius: 9px; padding-left: 11px; font-size: 20px; color: #59636e; }
.search span { margin-top: 4px; }
.search svg { width: 24px; height: 24px; margin-right: 11px; }
.search kbd { width: 24px; height: 24px; margin: 6px 6px 0 4px; border: 1px solid #59636e; border-radius: 5px; font: 16px/21px "Open Sans", sans-serif; text-align: center; }
.vr { width: 1px; height: 30px; background: #d1d9e0; margin: 0 6px 0 18px; }
.sq.plus { width: 86px; gap: 12px; }
.sq.inbox { position: relative; }
.dot { position: absolute; right: -6px; top: -6px; width: 18px; height: 18px; border: 3px solid #f6f8fa; border-radius: 50%; background: #0969da; }
.avatar { width: 50px; height: 50px; margin-left: 12px; }
.gh-nav { height: 48px; display: flex; align-items: center; gap: 12px; padding-left: 24px; }
.gh-nav a { display: flex; align-items: center; padding: 0 12px; font-size: 20px; color: #1f2328; white-space: nowrap; }
.gh-nav svg { margin-right: 13px; }
.gh-nav span { margin-top: 2px; letter-spacing: -.08px; }
.gh-nav em, .box-head em { font-size: 17px; font-weight: 600; background: #e7ebee; text-align: center; border-radius: 15px; height: 29px; line-height: 29px; }
.gh-nav em { width: 30px; margin-left: 13px; }
.gh-nav .w-code { width: 49px; margin-left: -1px; }
.gh-nav .w-issues { width: 56px; letter-spacing: -.3px; }
.w-pulls { width: 120px; }
.w-actions { width: 70px; }
.w-projects { width: 73px; }
.gh-nav .w-wiki { width: 42px; letter-spacing: .3px; }
.w-security { width: 75px; }
.w-insights { width: 73px; }

/* milestones */
.content { padding: 48px 36px 0 36px; }
.heading { display: flex; align-items: center; justify-content: space-between; height: 48px; }
h1 { margin: 0 0 2px; font-size: 28.500px; font-weight: 600; letter-spacing: -.25px; }
.new { width: 180px; height: 48px; border: 1px solid #1b7a38; border-radius: 9px; background: #1f883d; color: #fff; font: 600 20px "Open Sans", sans-serif; letter-spacing: -.2px; padding: 2px 0 0; white-space: nowrap; }
.box { margin-top: 24px; height: 339px; border: 1px solid #d1d9e0; border-radius: 9px; overflow: hidden; }
.box-head { height: 72px; display: flex; align-items: center; background: #f6f8fa; border-bottom: 1px solid #d1d9e0; padding: 0 25px 0 24px; font-size: 20px; }
.box-head span { margin-top: 2px; }
.box-head em { width: 48px; margin-bottom: 1px; font-size: 16.500px; }
.open { width: 65px; font-weight: 700; letter-spacing: -.2px; }
.closed { width: 75px; margin-left: 24px; color: #59636e; }
.sort { margin-left: auto; display: flex; align-items: center; font-weight: 600; fill: #59636e; }
.sort svg { width: 24px; height: 24px; }
.sort span { width: 41px; margin: 3px 11px 0 12px; letter-spacing: -.1px; }
.row { height: 133px; margin: 0 24px; padding: 12px 12px 0; display: flex; border-top: 1px solid #dfe4e9; }
.box-head + .row { border-top: 0; height: 132px; }
.info { width: 1205px; flex: none; }
h2 { margin: 0; font-size: 23px; line-height: 39px; font-weight: 600; letter-spacing: -.1px; }
.info p { margin: 0; color: #59636e; white-space: nowrap; }
.desc { font-size: 20px; line-height: 38px; letter-spacing: -.055px; }
.desc.short { letter-spacing: 0; }
.meta { display: flex; font-size: 17.400px; line-height: 30px; letter-spacing: -.05px; }
.meta span:last-child { letter-spacing: -.2px; }
.bullet { width: 31px; text-align: center; }
.stats { width: 480px; flex: none; }
.progress { height: 8px; margin-top: 15px; border-radius: 4px; background: #1f883d; }
.row + .row .progress { height: 7px; }
.nums { display: flex; margin-top: 13px; font-size: 20px; line-height: 32px; color: #59636e; white-space: nowrap; letter-spacing: 0; }
.nums b { font-weight: 600; color: #1f2328; letter-spacing: -.5px; }
.pct { width: 166px; }
.opn { width: 89px; }
.kebab { width: 24px; height: 24px; margin: 9px 0 0 24px; fill: #1f2328; }

/* taskbar */
.taskbar { position: relative; height: 72px; flex: none; display: flex; border-top: 2px solid #4a4947; color: #fff;
  background: linear-gradient(90deg, #2c2019 0, #2f2217 360px, #242533 450px, #23263a 640px, #1f2439 850px, #272528 990px, #27252a 1080px, #1f2438 1200px, #1f2438 1490px, #26252a 1570px, #2b2118 1680px, #252119 1920px); }
.weather { width: 334px; position: relative; padding: 16px 0 0 33px; }
.weather svg { width: 40px; height: 50px; }
.alert { position: absolute; left: 47px; top: 9px; width: 24px; height: 24px; border-radius: 50%; background: #fd98a4; color: #111; font-size: 17px; line-height: 24px; text-align: center; }
.apps { display: flex; }
.app { position: relative; width: 66px; display: flex; justify-content: center; padding-top: 16px; }
.app:first-child { padding-right: 4px; }
.app svg { width: 36px; height: 36px; }
.running::after { content: ""; position: absolute; left: 29px; top: 58px; width: 9px; height: 5px; border-radius: 3px; background: #96969b; }
.current::before { content: ""; position: absolute; left: 3px; top: 4px; width: 60px; height: 60px; border: 1px solid #414045; border-radius: 6px; background: #353438; }
.current svg { position: relative; }
.current::after { left: 21px; width: 24px; background: #d6d6d8; }
.glyph { fill: #fff; font-family: "Open Sans", sans-serif; font-weight: 700; text-anchor: middle; }
.badge-s, .badge-n { position: absolute; top: 9px; height: 24px; border-radius: 12px; text-align: center; }
.badge-s { left: 35px; width: 24px; background: #f4511e; font-size: 15px; line-height: 21px; font-weight: 600; }
.badge-n { left: 31px; width: 31px; background: #d6d9dc; color: #111; font-size: 17px; line-height: 24px; letter-spacing: -.5px; }
.tray { flex: 1; display: flex; align-items: center; padding: 0 29px 2px 103px; }
.tray svg { fill: none; stroke: #fff; }
.t-caret { width: 16px; height: 10px; }
.t-sync { width: 26px; height: 26px; margin-left: 27px; }
.t-wifi { width: 24px; height: 18px; margin-left: 23px; }
.t-sound { width: 24px; height: 20px; margin-left: 12px; }
.t-batt { width: 24px; height: 20px; margin-left: 12px; margin-bottom: 3px; }
.clock { margin-left: auto; margin-bottom: 2px; display: flex; flex-direction: column; align-items: flex-end; font-size: 17.500px; line-height: 24px; letter-spacing: .05px; }
.clock span:first-child { letter-spacing: -.1px; }
.t-bell { width: 24px; height: 24px; margin-left: 12px; margin-top: 4px; }
```
